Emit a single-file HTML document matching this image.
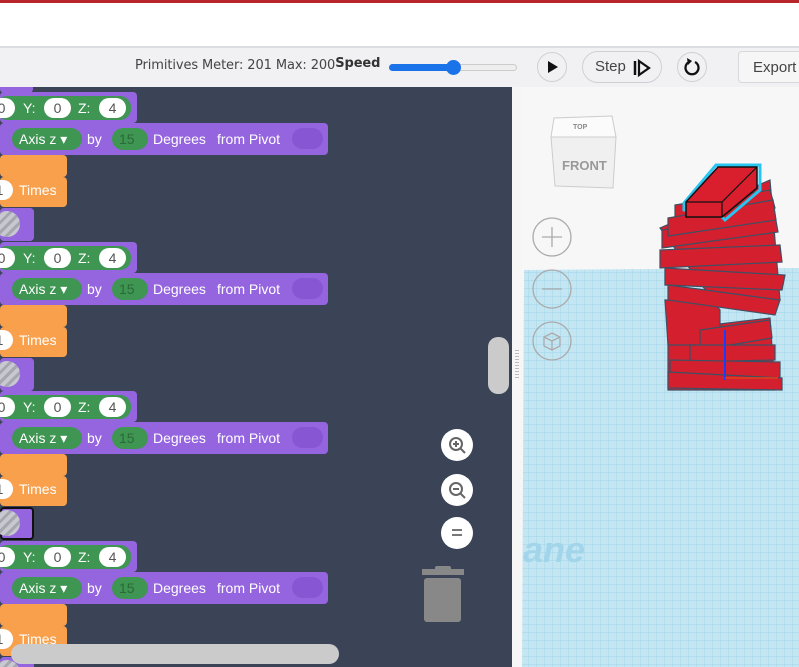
<!DOCTYPE html>
<html><head><meta charset="utf-8"><style>
*{margin:0;padding:0;box-sizing:border-box}
body{width:799px;height:667px;overflow:hidden;position:relative;font-family:"Liberation Sans","DejaVu Sans",sans-serif;background:#fff}
.abs{position:absolute}
.ws{background:#3a4456;left:0;top:87px;width:512px;height:580px;overflow:hidden}
.p{position:absolute;background:#9565df;border-radius:4px}
.o{position:absolute;background:#f8a04c;border-radius:4px}
.t{position:absolute;color:#fff;font-size:14px;line-height:20px}
.wp{position:absolute;background:#fff;border-radius:11px;color:#555;font-size:14px;text-align:center;line-height:20px;height:20px}
.g{position:absolute;background:#3f9552;border-radius:11px;height:22px}
.btn{position:absolute;border:1px solid #cfd0d4;border-radius:16px;height:32px;top:51px}
</style></head><body>
<div class="abs" style="left:0;top:0;width:799px;height:3px;background:#b8262b"></div>
<div class="abs" style="left:0;top:46px;width:799px;height:2px;background:#dcdde0"></div>
<div class="abs" style="left:0;top:48px;width:799px;height:39px;background:#f1f1f3"></div>
<div class="abs" style="left:135px;top:58px;color:#444;font-family:'DejaVu Sans',sans-serif;font-size:13px;letter-spacing:-0.1px">Primitives Meter: 201 Max: 200<b style="color:#333;position:relative;top:-2px">Speed</b></div>
<div class="abs" style="left:389px;top:64px;width:128px;height:7px;border-radius:4px;background:#eee;border:1px solid #ccc"></div>
<div class="abs" style="left:389px;top:64px;width:64px;height:7px;border-radius:4px;background:#1a73e8"></div>
<div class="abs" style="left:446px;top:60px;width:15px;height:15px;border-radius:50%;background:#1a73e8"></div>
<div class="btn" style="left:537px;top:52px;width:30px;height:30px;border-radius:50%"><svg width="28" height="28" viewBox="0 0 28 28"><path d="M10 8 L20 14 L10 20Z" fill="#111"/></svg></div>
<div class="btn" style="left:582px;width:80px"><span style="position:absolute;left:12px;top:6px;font-size:15px;color:#444">Step</span><svg class="abs" style="left:49px;top:6px" width="20" height="20" viewBox="0 0 20 20"><path d="M3 3V17" stroke="#111" stroke-width="2.5"/><path d="M7 3 L17 10 L7 17Z" fill="none" stroke="#111" stroke-width="2.2"/></svg></div>
<div class="btn" style="left:677px;top:52px;width:30px;height:30px;border-radius:50%"><svg width="28" height="28" viewBox="0 0 28 28"><path d="M11 9 A6.5 6.5 0 1 0 17 9" fill="none" stroke="#111" stroke-width="2.3"/><path d="M9 5 L14 8 L10 12Z" fill="#111"/></svg></div>
<div class="abs" style="left:738px;top:51px;width:70px;height:32px;border:1px solid #d8d8dc;border-radius:4px;background:#f6f6f7;font-size:15px;color:#444;padding:7px 0 0 14px">Export</div>

<div class="abs ws">
<div class="p" style="left:0;top:-3px;width:33px;height:9px"></div>
<div id="grp"></div>
<div class="abs" style="left:488px;top:250px;width:21px;height:57px;border-radius:10px;background:#cbcbcb"></div>
<div class="abs" style="left:11px;top:557px;width:328px;height:20px;border-radius:10px;background:#cbcbcb"></div>
<div class="abs" style="left:441px;top:342px;width:32px;height:32px;border-radius:50%;background:#fff"><svg width="32" height="32"><circle cx="15" cy="15" r="6" fill="none" stroke="#666" stroke-width="2"/><path d="M19.5 19.5L24 24M12 15H18M15 12V18" stroke="#666" stroke-width="2"/></svg></div>
<div class="abs" style="left:441px;top:387px;width:32px;height:32px;border-radius:50%;background:#fff"><svg width="32" height="32"><circle cx="15" cy="15" r="6" fill="none" stroke="#666" stroke-width="2"/><path d="M19.5 19.5L24 24M12 15H18" stroke="#666" stroke-width="2"/></svg></div>
<div class="abs" style="left:441px;top:430px;width:32px;height:32px;border-radius:50%;background:#fff"><svg width="32" height="32"><path d="M11 13H21M11 18H21" stroke="#777" stroke-width="2"/></svg></div>
<svg class="abs" style="left:421px;top:479px" width="44" height="58"><rect x="1" y="3" width="42" height="6" fill="#888"/><rect x="14" y="0" width="16" height="5" rx="2" fill="#888"/><rect x="3" y="12" width="37" height="44" rx="3" fill="#888"/></svg>
</div>

<div class="abs" style="left:512px;top:87px;width:10px;height:580px;background:#f6f6f6"></div>
<div class="abs" style="left:515px;top:350px;width:4px;height:28px;background:repeating-linear-gradient(#bbb 0 1px,transparent 1px 3px)"></div>
<div class="abs" style="left:522px;top:87px;width:277px;height:580px;background:#f7f7f7;overflow:hidden">
<svg width="277" height="580" viewBox="522 87 277 580">
<defs><pattern id="gr" width="8" height="8" patternUnits="userSpaceOnUse"><rect width="8" height="8" fill="#c4e6f2"/><path d="M0 0H8M0 0V8" stroke="#93cfe6" stroke-width="0.7"/></pattern></defs>
<path d="M524 270 L799 268 L799 667 L522 667Z" fill="url(#gr)"/>
<text x="523" y="562" font-size="36" font-style="italic" font-weight="bold" fill="#a3d5ea" font-family="Liberation Sans">ane</text>
<g stroke="#3d5064" stroke-width="1.2" fill="#d41f2f">
<path d="M668 330 L770 318 L775 390 L668 390Z"/>
<path d="M660 228 L770 180 L780 300 L665 300 L668 345 L720 345 L720 310Z"/>
<path d="M662 230 L775 215 L778 232 L662 248Z"/>
<path d="M660 250 L780 245 L782 262 L660 268Z"/>
<path d="M665 268 L785 275 L782 290 L665 285Z"/>
<path d="M668 285 L780 300 L775 315 L668 300Z"/>
<path d="M675 205 L770 190 L775 208 L675 222Z"/>
<path d="M668 218 L773 200 L776 220 L668 236Z"/>
<path d="M700 330 L770 320 L772 338 L700 350Z"/>
<path d="M690 345 L775 345 L775 360 L690 362Z"/>
<path d="M670 360 L780 362 L780 378 L670 376Z"/>
<path d="M668 372 L782 378 L782 390 L668 388Z"/>
</g>
<path d="M684 203 L716 165 L760 165 L760 190 L725 220 L720 215 L684 210Z" fill="none" stroke="#29c5f0" stroke-width="3"/>
<path d="M686 202 L718 167 L757 167 L757 188 L722 217 L686 217Z" fill="#d91f2e" stroke="#111" stroke-width="1.5"/>
<path d="M686 202 L722 202 L757 167 M722 202 V217" stroke="#111" stroke-width="1.2" fill="none"/>
<path d="M725 330 V380" stroke="#1a3cff" stroke-width="2"/>
<path d="M725 378 H778" stroke="#e2401a" stroke-width="1.5"/>
<path d="M554 118 L612 116 L616 137 L551 137Z" fill="#fbfbfb" stroke="#ccc"/>
<path d="M551 137 L616 137 L613 188 L555 186Z" fill="#f0f0f0" stroke="#ccc"/>
<text x="573" y="129" font-size="7" fill="#888" font-family="Liberation Sans" font-weight="bold">TOP</text>
<text x="562" y="170" font-size="13" fill="#999" font-family="Liberation Sans" font-weight="bold">FRONT</text>
<g fill="none" stroke="#aaa" stroke-width="1.3"><circle cx="552" cy="237" r="19" fill="#f7f7f7"/><path d="M542 237H562M552 227V247"/><circle cx="552" cy="289" r="19"/><path d="M542 289H562"/><circle cx="552" cy="341" r="19"/><path d="M552 333L560 337V346L552 350L544 346V337Z M544 337L552 341L560 337 M552 341V350"/></g>
</svg>
</div>
<script>
var h='';
[0,150,299,449].forEach(function(o,i){var y=o;
h+='<div class="p" style="left:0;top:'+(y+5)+'px;width:137px;height:31px"></div><div class="g" style="left:-4px;top:'+(y+9)+'px;width:135px;height:24px"></div>'+
'<div class="wp" style="left:-12px;top:'+(y+11)+'px;width:27px">0</div><span class="t" style="left:23px;top:'+(y+11)+'px">Y:</span><div class="wp" style="left:44px;top:'+(y+11)+'px;width:27px">0</div><span class="t" style="left:78px;top:'+(y+11)+'px">Z:</span><div class="wp" style="left:99px;top:'+(y+11)+'px;width:27px">4</div>'+
'<div class="p" style="left:0;top:'+(y+36)+'px;width:328px;height:32px"></div><span class="t" style="left:-3px;top:'+(y+42)+'px">l</span>'+
'<div class="g" style="left:12px;top:'+(y+41)+'px;width:70px"></div><span class="t" style="left:19px;top:'+(y+42)+'px">Axis z ▾</span><span class="t" style="left:87px;top:'+(y+42)+'px">by</span>'+
'<div class="g" style="left:112px;top:'+(y+41)+'px;width:36px"></div><span class="t" style="left:119px;top:'+(y+42)+'px;color:#2a6a38">15</span><span class="t" style="left:153px;top:'+(y+42)+'px">Degrees</span><span class="t" style="left:217px;top:'+(y+42)+'px">from Pivot</span>'+
'<div class="abs" style="left:292px;top:'+(y+41)+'px;width:31px;height:21px;border-radius:11px;background:#8757d3"></div>'+
'<div class="o" style="left:0;top:'+(y+68)+'px;width:67px;height:22px"></div><div class="o" style="left:0;top:'+(y+90)+'px;width:67px;height:30px"></div>'+
'<div class="wp" style="left:-14px;top:'+(y+93)+'px;width:27px">1</div><span class="t" style="left:19px;top:'+(y+93)+'px">Times</span>'+
'<div class="p" style="left:0;top:'+(y+121)+'px;width:34px;height:33px;'+(i==2?'border:2px solid #111':'')+'"></div>'+
'<div class="abs" style="left:-6px;top:'+(y+124)+'px;width:26px;height:26px;border-radius:50%;background:repeating-linear-gradient(135deg,#c8c8d0 0 4px,#a7a7b0 4px 7px)"></div>';});
document.getElementById('grp').outerHTML=h;
</script>
</body></html>
